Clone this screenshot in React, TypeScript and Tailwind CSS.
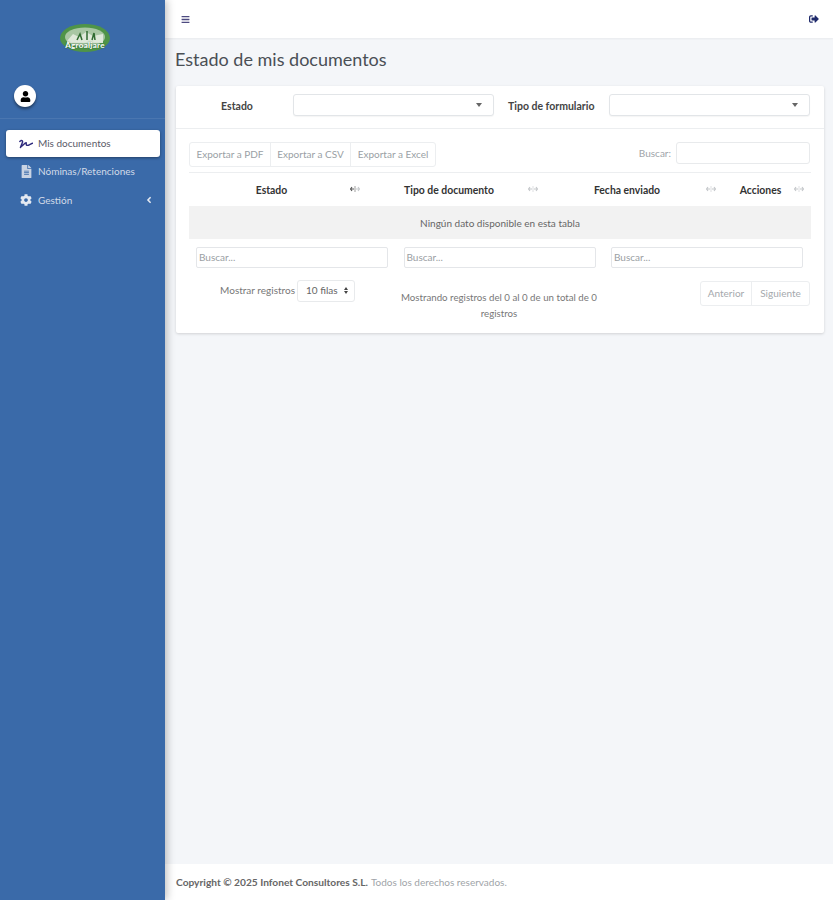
import React from 'react';
import { FaAngleLeft, FaBars, FaCog, FaFileAlt, FaSignature, FaSignOutAlt, FaUser } from 'react-icons/fa';

const font = { fontFamily: '"Source Sans Pro", Lato, "Noto Sans", sans-serif' };

const SortIcon = ({ active = false, last = false }: { active?: boolean; last?: boolean }) => (
  <svg width="10" height="8" viewBox="0 0 10 8" className={`absolute top-[12px] ${last ? 'right-[7px]' : 'right-[4px]'}`}>
    <path d="M0.5 4H4M2 2L0.5 4L2 6" fill="none" stroke={active ? '#555' : '#c4c7ca'} strokeWidth="1.1" />
    <path d="M6 4H9.5M8 2L9.5 4L8 6" fill="none" stroke="#c4c7ca" strokeWidth="1.1" />
    <path d="M5 1V7" stroke={active ? '#888' : '#d5d7da'} strokeWidth="0.8" />
  </svg>
);

const Logo = () => (
  <div className="flex justify-center pt-[23px] pb-[32px] pl-[5px]">
    <div className="relative h-[30px] w-[52px]">
      <svg width="52" height="30" viewBox="0 0 52 30">
        <ellipse cx="26" cy="15" rx="25" ry="14" fill="#4f9448" />
        <ellipse cx="26" cy="14" rx="20" ry="9.5" fill="#a9c7a4" />
        <path d="M8 18L14 11L20 14L27 9L34 13L44 11V20H8Z" fill="#dfe9da" />
        <path d="M18 17l3-6 2 6M28 17V8M33 17l2-7 1 7" stroke="#2f6a30" strokeWidth="1.5" fill="none" />
      </svg>
      <span className="absolute -left-[2px] -right-[2px] top-[18px] text-center text-[8px] leading-[9px] font-bold tracking-[0.3px] text-white [text-shadow:0_0_2px_#1f5a2a]">Agroaljare</span>
    </div>
  </div>
);

const Sidebar = () => (
  <aside className="z-10 flex w-[165px] shrink-0 flex-col bg-[#3a6aa9] shadow-[2px_0_8px_rgba(0,0,0,0.25)]">
    <Logo />
    <div className="h-[34px] border-b border-[#4a76b0] pl-[14px]">
      <div className="flex h-[22px] w-[22px] items-center justify-center rounded-full bg-white shadow-[0_2px_3px_rgba(0,0,0,0.45)]">
        <FaUser size={11} className="text-black" />
      </div>
    </div>
    <nav className="flex flex-col pt-[11px] pr-[5px] pl-[6px] text-[10px]">
      <a className="flex h-[27px] items-center rounded-[3px] bg-white pl-[13px] text-[#5a5a68] shadow-[0_1px_3px_rgba(0,0,0,0.4)]">
        <FaSignature size={14} className="mr-[5px] text-[#2f2b7d]" />
        Mis documentos
      </a>
      <a className="flex h-[28px] items-center pl-[14px] text-[#d3dbe8]">
        <FaFileAlt size={13} className="mr-[5px] text-[#c9d3e3]" />
        Nóminas/Retenciones
      </a>
      <a className="mt-px flex h-[28px] items-center pl-[14px] text-[#d3dbe8]">
        <FaCog size={12} className="mr-[6px] text-[#e4e9f1]" />
        Gestión
        <FaAngleLeft size={10} className="mr-[6px] ml-auto text-[#e4e9f1]" />
      </a>
    </nav>
  </aside>
);

const Select = ({ className = '' }: { className?: string }) => (
  <div className={`flex h-[22px] items-center justify-end self-start rounded-[3px] border border-[#e2e5e8] bg-white pr-[11px] shadow-[0_1px_1px_rgba(0,0,0,0.04)] ${className}`}>
    <span className="h-0 w-0 border-x-[3px] border-t-[4px] border-x-transparent border-t-[#666]" />
  </div>
);

const Toolbar = () => (
  <div className="flex items-start justify-between">
    <div className="flex h-[25px] rounded-[3px] border border-[#eceef0] text-[10px] text-[#9a9fa5]">
      <span className="flex w-[81px] items-center justify-center border-r border-[#eceef0]">Exportar a PDF</span>
      <span className="flex w-[80px] items-center justify-center border-r border-[#eceef0]">Exportar a CSV</span>
      <span className="flex w-[84px] items-center justify-center">Exportar a Excel</span>
    </div>
    <div className="flex items-center gap-[5px] pr-px text-[10px] text-[#a0a4a9]">
      Buscar:
      <div className="h-[22px] w-[134px] rounded-[3px] border border-[#e8eaec]" />
    </div>
  </div>
);

const Table = () => (
  <table className="mt-[5px] w-full table-fixed border-collapse text-[10px]">
    <thead>
      <tr className="h-[33px] border-t border-[#eceef0] text-[10.4px] text-[#333]">
        <th className="relative w-[175px] pt-[3px] pr-[10px] font-bold">Estado<SortIcon active /></th>
        <th className="relative w-[178px] pt-[3px] pr-[8px] font-bold">Tipo de documento<SortIcon /></th>
        <th className="relative w-[178px] pt-[3px] pr-[8px] font-bold">Fecha enviado<SortIcon /></th>
        <th className="relative pt-[3px] pr-[10px] font-bold">Acciones<SortIcon last /></th>
      </tr>
    </thead>
    <tbody>
      <tr className="h-[33px] bg-[#f2f2f2] text-[#666]">
        <td colSpan={4} className="pt-[2px] text-center">Ningún dato disponible en esta tabla</td>
      </tr>
    </tbody>
  </table>
);

const ColumnSearch = () => (
  <div className="mt-[8px] flex justify-between pr-[8px] pl-[7px]">
    {[0, 1, 2].map((i) => (
      <div key={i} className="flex h-[21px] w-[192px] items-center rounded-[2px] border border-[#e4e6e9] pl-[2px] text-[10px] text-[#9a9ea3]">
        Buscar...
      </div>
    ))}
  </div>
);

const BottomRow = () => (
  <div className="mt-[12px] flex items-start">
    <div className="flex w-[166px] items-center justify-end gap-[2px] text-[10px] text-[#777]">
      Mostrar registros
      <div className="flex h-[22px] w-[58px] items-center justify-between rounded-[3px] border border-[#e8eaec] pr-[6px] pl-[8px] text-[#666]">
        10 filas
        <span className="flex flex-col gap-px">
          <span className="h-0 w-0 border-x-[2.5px] border-b-[3px] border-x-transparent border-b-[#444]" />
          <span className="h-0 w-0 border-x-[2.5px] border-t-[3px] border-x-transparent border-t-[#444]" />
        </span>
      </div>
    </div>
    <div className="ml-[36px] w-[216px] pt-[9px] text-center text-[9.7px] leading-[16px] text-[#777]">
      Mostrando registros del 0 al 0 de un total de 0 registros
    </div>
    <div className="mt-px mr-px ml-auto flex h-[25px] rounded-[3px] border border-[#eceef0] text-[10px] text-[#a5a9ad]">
      <span className="flex w-[51px] items-center justify-center border-r border-[#eceef0]">Anterior</span>
      <span className="flex w-[57px] items-center justify-center">Siguiente</span>
    </div>
  </div>
);

const Card = () => (
  <section className="mt-[14px] mr-[9px] ml-[11px] rounded-[2px] bg-white shadow-[0_1px_3px_rgba(0,0,0,0.15)]">
    <div className="flex h-[43px] items-center border-b border-[#eceef0] pt-[8px] pb-[2px] text-[10.5px] font-bold text-[#444]">
      <span className="-mt-[6px] w-[117px] pl-[5px] text-center">Estado</span>
      <Select className="w-[201px]" />
      <span className="-mt-[6px] mr-[15px] ml-[14px] whitespace-nowrap">Tipo de formulario</span>
      <Select className="w-[201px]" />
    </div>
    <div className="px-[13px] pt-[13px] pb-[12px]">
      <Toolbar />
      <Table />
      <ColumnSearch />
      <BottomRow />
    </div>
  </section>
);

export default function App() {
  return (
    <div style={font} className="flex h-[900px] w-full overflow-hidden bg-[#f4f6f9]">
      <Sidebar />
      <main className="flex min-w-0 flex-1 flex-col">
        <header className="flex h-[38px] shrink-0 items-center justify-between bg-white pr-[14px] pl-[16px] shadow-[0_1px_2px_rgba(0,0,0,0.05)]">
          <FaBars size={9} className="text-[#4d4a80]" />
          <FaSignOutAlt size={10} className="text-[#1f2a6b]" />
        </header>
        <h1 className="mt-[9px] pl-[10px] text-[18px] leading-[25px] text-[#4a4f55]">Estado de mis documentos</h1>
        <Card />
        <footer className="mt-auto flex h-[36px] items-center bg-white pt-px pl-[11px] text-[10px] text-[#a0a4a8]">
          <strong className="mr-[3px] text-[10.2px] font-bold text-[#666]">Copyright © 2025 Infonet Consultores S.L.</strong>
          Todos los derechos reservados.
        </footer>
      </main>
    </div>
  );
}
